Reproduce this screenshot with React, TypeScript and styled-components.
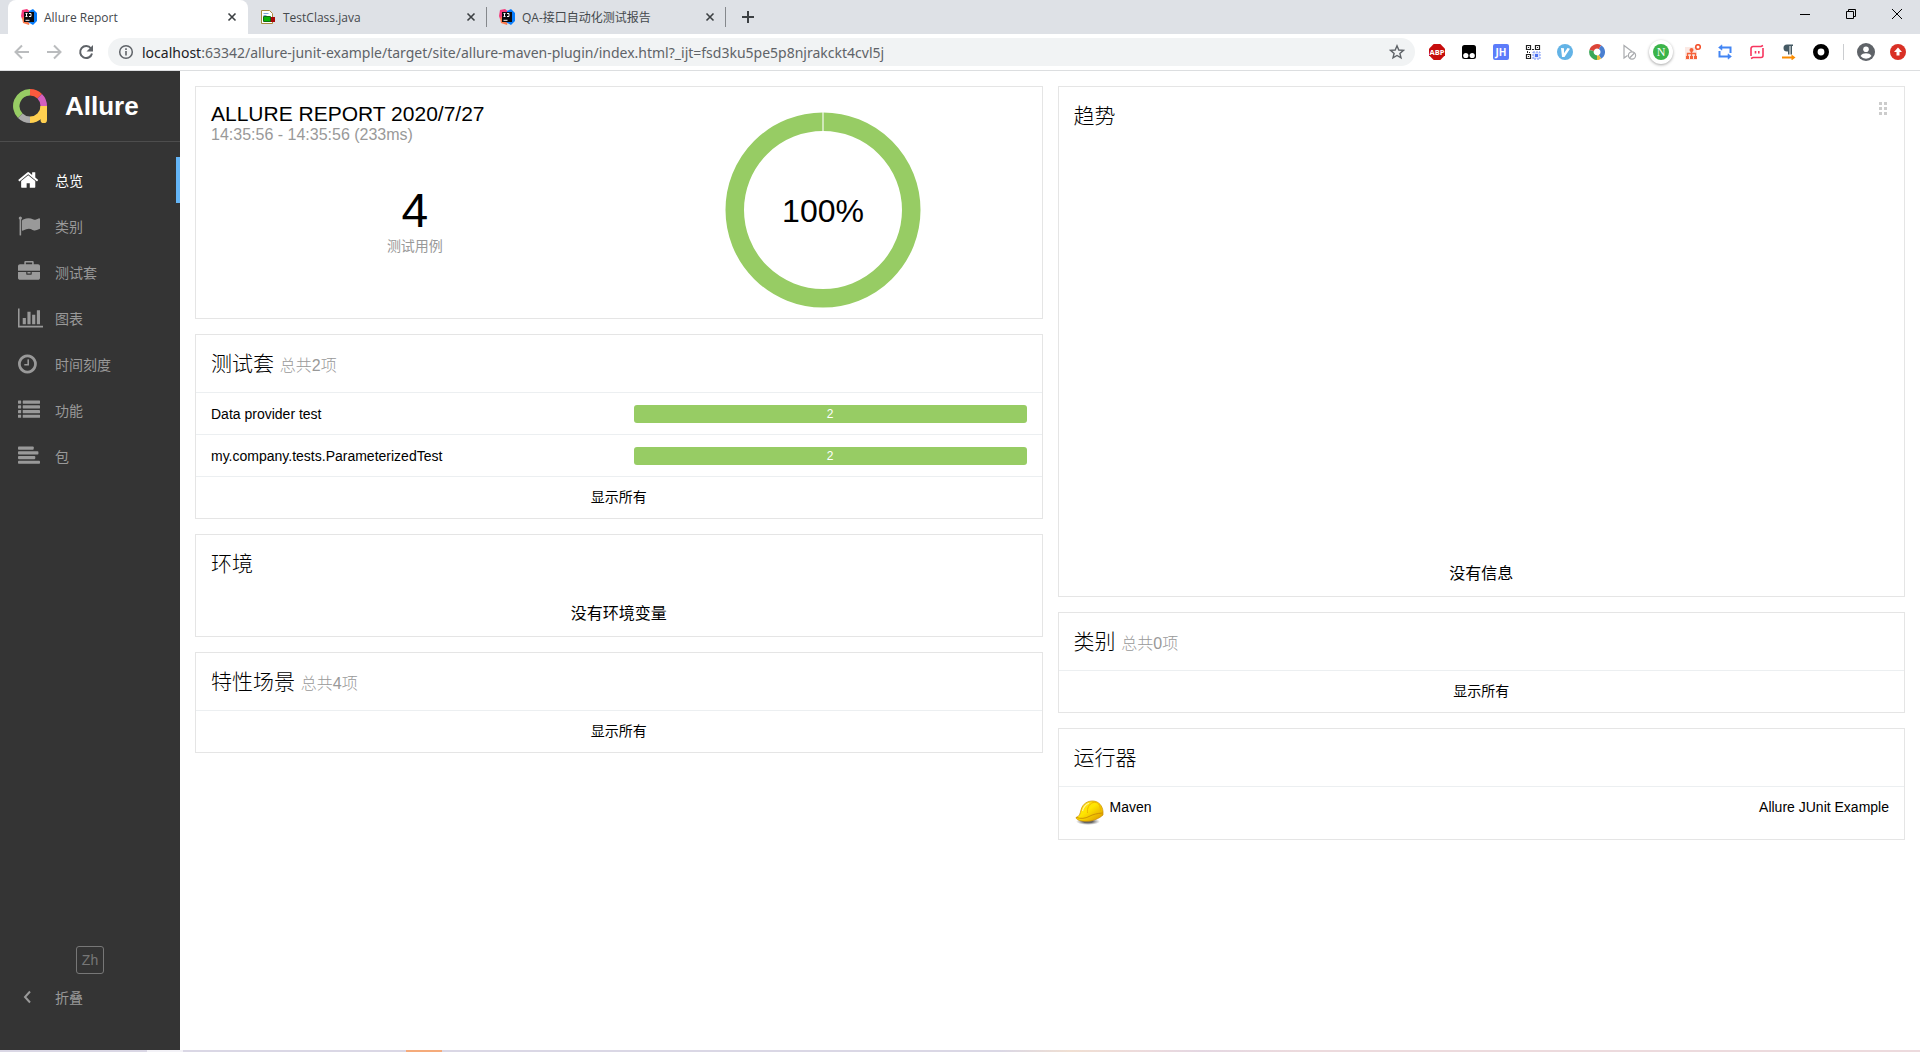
import React from "react";
import styled, { createGlobalStyle } from "styled-components";

const sans = `"Liberation Sans", Arial, "Noto Sans CJK SC", sans-serif`;
const chromeFont = `"Open Sans", "Noto Sans CJK SC", sans-serif`;

const GlobalStyle = createGlobalStyle`
  * { box-sizing: border-box; }
  body { margin: 0; background: #fff; font-family: ${sans}; font-size: 14px; color: #000; }
  a { color: inherit; text-decoration: none; }
  button { border: 0; padding: 0; background: none; font: inherit; color: inherit; cursor: pointer; }
  h1, h2, p, ul { margin: 0; padding: 0; font-weight: 400; }
  ul { list-style: none; }
  svg { display: block; flex: none; }
`;

const Screen = styled.div`
  display: flex;
  flex-direction: column;
  min-height: 100vh;
`;

/* ---------- browser chrome ---------- */

const TabStrip = styled.div`
  display: flex;
  height: 34px;
  padding-left: 8px;
  background: #dee1e6;
  font-family: ${chromeFont};
  font-size: 12px;
`;

const Tab = styled.div<{ $active?: boolean; $divided?: boolean }>`
  position: relative;
  display: flex;
  align-items: center;
  width: ${(p) => (p.$active ? 240 : 239)}px;
  padding: 0 10px 0 ${(p) => (p.$active ? 13 : 12)}px;
  color: #45494d;
  border-radius: 8px 8px 0 0;
  background: ${(p) => (p.$active ? "#fff" : "transparent")};
  &::after {
    content: "";
    position: absolute;
    right: 0;
    top: 7px;
    width: 1px;
    height: 20px;
    background: ${(p) => (p.$divided ? "#85888c" : "transparent")};
  }
`;

const TabTitle = styled.button`
  flex: 1;
  display: flex;
  align-items: center;
  gap: 7px;
  text-align: left;
  white-space: nowrap;
`;

const IconButton = styled.button<{ $size?: number }>`
  display: flex;
  align-items: center;
  justify-content: center;
  flex: none;
  width: ${(p) => p.$size ?? 32}px;
  height: ${(p) => p.$size ?? 32}px;
`;

const NewTab = styled(IconButton)`
  margin-left: 6px;
  height: 34px;
`;

const WindowControls = styled.div`
  display: flex;
  margin-left: auto;
`;

const WindowButton = styled(IconButton)`
  width: 46px;
  height: 28px;
`;

const Toolbar = styled.div`
  display: flex;
  align-items: center;
  height: 37px;
  padding: 0 6px;
  border-bottom: 1px solid #dcdee0;
  background: #fff;
`;

const AddressBar = styled.label`
  flex: 1;
  display: flex;
  align-items: center;
  height: 28px;
  margin: 0 6px;
  padding: 0 2px 0 10px;
  border-radius: 14px;
  background: #f1f3f4;
  font-family: "Noto Sans", "Open Sans", sans-serif;
  font-size: 14px;
`;

const Host = styled.span`
  padding-left: 8px;
  color: #202124;
`;

const UrlInput = styled.input`
  flex: 1;
  min-width: 0;
  padding: 0;
  border: 0;
  outline: 0;
  background: transparent;
  color: #5f6368;
  font: inherit;
`;

const Separator = styled.span`
  width: 1px;
  height: 16px;
  margin: 0 6px;
  background: #cbcdd0;
`;

const Halo = styled.span`
  display: flex;
  align-items: center;
  justify-content: center;
  flex: none;
  width: 24px;
  height: 24px;
  border-radius: 50%;
  background: #fff;
  box-shadow: 0 1px 3px rgba(0, 0, 0, 0.35);
`;

/* ---------- report page ---------- */

const Page = styled.div`
  flex: 1;
  display: flex;
`;

const Sidebar = styled.aside`
  display: flex;
  flex-direction: column;
  flex: none;
  width: 180px;
  padding-bottom: 30px;
  background: #343434;
  color: #999;
`;

const Brand = styled.a`
  display: flex;
  align-items: center;
  gap: 18px;
  height: 71px;
  padding-left: 13px;
  border-bottom: 1px solid #4d4d4d;
  color: #fff;
  font-size: 26px;
  font-weight: 700;
`;

const Nav = styled.nav`
  padding-top: 15px;
`;

const NavLink = styled.a<{ $active?: boolean }>`
  display: flex;
  align-items: center;
  height: 46px;
  padding-left: 18px;
  border-right: 4px solid ${(p) => (p.$active ? "#64b5f6" : "transparent")};
  color: ${(p) => (p.$active ? "#fff" : "#999")};
`;

const NavIcon = styled.span`
  width: 37px;
`;

const SidebarFooter = styled.div`
  display: flex;
  flex-direction: column;
  margin-top: auto;
`;

const LanguageButton = styled.button`
  align-self: center;
  width: 28px;
  height: 28px;
  border: 1px solid #777;
  border-radius: 3px;
  color: #777;
`;

const CollapseButton = styled.button`
  display: flex;
  align-items: center;
  height: 46px;
  padding-left: 18px;
`;

const Content = styled.main`
  flex: 1;
  display: grid;
  grid-template-columns: 1fr 1fr;
  align-items: start;
  gap: 15px;
  padding: 15px;
`;

const Column = styled.div`
  display: flex;
  flex-direction: column;
  gap: 15px;
`;

const Card = styled.section`
  border: 1px solid #e5e5e5;
  background: #fff;
`;

const CardHeader = styled.header`
  display: flex;
  justify-content: space-between;
  padding: 0 15px;
`;

const CardTitle = styled.h2`
  font-size: 21px;
  font-weight: 300;
  line-height: 57px;
`;

const CardCount = styled.small`
  color: #999;
  font-size: 16px;
  line-height: 16px;
`;

const Summary = styled.div`
  display: grid;
  grid-template-columns: 1fr 1fr;
  padding: 15px 15px 10px;
`;

const SummaryTitle = styled.h1`
  font-size: 21px;
  line-height: 24px;
`;

const SummaryTime = styled.p`
  color: #999;
  font-size: 16px;
  line-height: 18px;
`;

const Statistic = styled.div`
  padding-top: 40px;
  text-align: center;
`;

const StatisticValue = styled.div`
  font-size: 48px;
  line-height: 54px;
`;

const StatisticLabel = styled.div`
  color: #999;
  line-height: 16px;
`;

const DonutBox = styled.div`
  display: flex;
  justify-content: center;
  padding-top: 10px;
`;

const Row = styled.a`
  display: grid;
  grid-template-columns: 1fr 1fr;
  align-items: center;
  height: 42px;
  border-top: 1px solid #eceff1;
`;

const RowName = styled.span`
  padding: 0 15px;
`;

const Bar = styled.span`
  margin: 0 15px;
  border-radius: 3px;
  background: #97cc64;
  color: #fff;
  font-size: 12px;
  line-height: 18px;
  text-align: center;
`;

const ShowAll = styled.a`
  display: flex;
  align-items: center;
  justify-content: center;
  height: 42px;
  padding-bottom: 3px;
  border-top: 1px solid #eceff1;
`;

const ChartArea = styled.div`
  height: 408px;
`;

const EmptyMessage = styled.p`
  font-size: 16px;
  line-height: 44px;
  text-align: center;
`;

const DragHandle = styled.button`
  align-self: flex-start;
  margin: 15px 2px 0 0;
  cursor: grab;
`;

const Executor = styled.a`
  display: flex;
  gap: 4px;
  padding: 12px 15px 8px;
  border-top: 1px solid #eceff1;
  line-height: 16px;
`;

const ExecutorBuild = styled.span`
  margin-left: auto;
`;

const Taskbar = styled.div`
  height: 2px;
  background: linear-gradient(
    90deg,
    #dad7e5 0 147px,
    #f3f2f7 147px 183px,
    #dad7e5 183px 406px,
    #f5ab7b 406px 442px,
    #dad7e5 442px 1000px,
    #f0dfd2 1070px,
    #ecdadd 1150px,
    #e4d7e2 1200px,
    #ecdadd 1300px
  );
`;

/* ---------- drawings ---------- */

const IdeaIcon = () => (
  <svg width="16" height="16" viewBox="0 0 16 16">
    <path d="M1 1l5-1 4 3-4 6-5 1-1-3z" fill="#f43b7c" />
    <path d="M1 9l4-3 4 6-1 4-6-2z" fill="#fc7a4c" />
    <path d="M8 2l4-2 4 4v8l-4 4-5-3z" fill="#087cfa" />
    <rect x="3" y="3" width="10" height="10" fill="#0b0b0f" />
    <path d="M4.500 4.500h2M5.500 4.500v3M4.500 7.500h2M8 4.500h2v3H8M4.500 11.300h4" stroke="#fff" fill="none" />
  </svg>
);

const JavaFileIcon = () => (
  <svg width="16" height="16" viewBox="0 0 16 16">
    <path d="M1.500 1.500h8l3 3v10h-11z" fill="#fff" stroke="#a88a3e" />
    <path d="M3.500 4.500h5M3.500 6.500h3" stroke="#7fa5d4" />
    <rect x="4" y="8" width="6" height="5" fill="#0bb40b" />
    <rect x="10" y="8" width="5" height="5" fill="#a80808" />
    <path d="M3.500 7.500h7v5h-7z" fill="none" stroke="#156a15" />
  </svg>
);

const CloseIcon = () => (
  <svg width="10" height="10" viewBox="0 0 10 10">
    <path d="M1.500 1.500l7 7M8.500 1.500l-7 7" stroke="#3c4043" strokeWidth="1.600" />
  </svg>
);

const stroke = { fill: "none", strokeWidth: 2 };

const ArrowIcon = ({ flip }: { flip?: boolean }) => (
  <svg width="16" height="16" viewBox="0 0 16 16">
    <path
      d={flip ? "M1 8h13M8 1.500L14.500 8 8 14.500" : "M15 8H2M8 1.500L1.500 8 8 14.500"}
      {...stroke}
      stroke="#babcbe"
    />
  </svg>
);

const ReloadIcon = () => (
  <svg width="16" height="16" viewBox="0 0 16 16">
    <path d="M13 4.500A6 6 0 1 0 14 9.500" {...stroke} stroke="#5f6368" />
    <path d="M15 1v6.500H8.500z" fill="#5f6368" />
  </svg>
);

const InfoIcon = () => (
  <svg width="16" height="16" viewBox="0 0 16 16">
    <circle cx="8" cy="8" r="6.300" fill="none" stroke="#5f6368" strokeWidth="1.500" />
    <path d="M8 7v4.500M8 4.300v1.700" stroke="#5f6368" strokeWidth="1.600" />
  </svg>
);

const StarIcon = () => (
  <svg width="16" height="16" viewBox="0 0 16 16">
    <path
      d="M8 1.800l1.800 4.200 4.600.4-3.500 3 1.100 4.500L8 11.500l-4 2.400 1.100-4.500-3.500-3 4.600-.4z"
      fill="none"
      stroke="#5f6368"
      strokeWidth="1.400"
    />
  </svg>
);

const extText = { fontFamily: "Open Sans", fontWeight: 700, textAnchor: "middle" as const };

const extensions: { name: string; art: React.ReactNode }[] = [
  {
    name: "AdBlock Plus",
    art: (
      <>
        <path d="M4.700 0h6.600L16 4.700v6.600L11.300 16H4.700L0 11.300V4.700z" fill="#c70d0d" />
        <text x="8" y="10.800" fontSize="7.500" fill="#fff" {...extText}>ABP</text>
      </>
    ),
  },
  {
    name: "Tampermonkey",
    art: (
      <>
        <rect x="1" y="1" width="14" height="14" rx="2.500" />
        <circle cx="4.800" cy="11.500" r="2.600" fill="#fff" />
        <circle cx="11.200" cy="11.500" r="2.600" fill="#fff" />
      </>
    ),
  },
  {
    name: "JSON Handle",
    art: (
      <>
        <rect width="16" height="16" rx="2" fill="#5c7cfa" />
        <text x="8" y="12" fontSize="10" fill="#fff" {...extText}>JH</text>
      </>
    ),
  },
  {
    name: "QR code",
    art: (
      <>
        <path
          d="M1.500 1.500h4v4h-4zM10.500 1.500h4v4h-4zM1.500 10.500h4v4h-4z"
          fill="none"
          stroke="#222"
          strokeWidth="1.200"
        />
        <path d="M3 3h1v1H3zM12 3h1v1h-1zM3 12h1v1H3zM7 5h2v1H7zM2 7h1v2H2zM4 8h1v1H4z" fill="#222" />
        <path d="M8 8h7v7H8z" fill="#dbe3ff" stroke="#7b95f5" strokeDasharray="2 1" />
        <rect x="10" y="10" width="3" height="3" fill="#4f73f2" />
      </>
    ),
  },
  {
    name: "Vimium",
    art: (
      <>
        <circle cx="8" cy="8" r="8" fill="#63b3e6" />
        <path d="M4 4l3 .3v4.900l3.500-5.200 2.500.800L7.500 13H5z" fill="#fff" />
      </>
    ),
  },
  {
    name: "Colour ring",
    art: (
      <g fill="none" strokeWidth="4.500">
        <path d="M2.600 6.500A5.700 5.700 0 0 1 11 3.100" stroke="#db4437" />
        <path d="M11 3.100A5.700 5.700 0 0 1 11 12.900" stroke="#4a7fd0" />
        <path d="M11 12.900A5.700 5.700 0 0 1 5 12.900" stroke="#e8b93a" />
        <path d="M8 13.700A5.700 5.700 0 0 1 2.600 6.500" stroke="#3aa757" />
      </g>
    ),
  },
  {
    name: "Cursor blocked",
    art: (
      <g fill="none" stroke="#a9abae" strokeWidth="1.200">
        <path d="M6.500 11.500L3 14V1.500l8 6" />
        <circle cx="11" cy="11.500" r="3.600" />
        <path d="M8.500 14l5-5" />
      </g>
    ),
  },
  {
    name: "N extension",
    art: (
      <>
        <circle cx="8" cy="8" r="8" fill="#3cb44a" />
        <text x="8" y="12" fontSize="12" fill="#fff" fontFamily="Liberation Serif" textAnchor="middle">N</text>
      </>
    ),
  },
  {
    name: "Sitemap",
    art: (
      <>
        <rect y="3" width="12" height="13" fill="#fbe9e4" />
        <circle cx="6.500" cy="6" r="2" fill="#f4623a" />
        <circle cx="13" cy="3" r="2.300" fill="none" stroke="#f4512c" strokeWidth="1.600" />
        <path d="M6.500 7v6M2.500 13v-3.500h8V13" fill="none" stroke="#f4623a" strokeWidth="1.400" />
        <path d="M1 12h3v3H1zM5 12h3v3H5zM9 12h3v3H9z" fill="#f4623a" />
      </>
    ),
  },
  {
    name: "Repeat",
    art: (
      <g fill="none" stroke="#4285f4" strokeWidth="2">
        <path d="M13.500 9V3.500H4M2.500 7v5.500H12" />
        <path d="M5 .8L1.500 3.500 5 6.200zM11 9.800l3.500 2.700L11 15.200z" fill="#4285f4" strokeWidth="0.500" />
      </g>
    ),
  },
  {
    name: "Recorder",
    art: (
      <g fill="none" stroke="#f7365f" strokeWidth="1.600">
        <path d="M14 1.500l-2 1H4a2 2 0 0 0-2 2V12M2 14.500l2-1H12a2 2 0 0 0 2-2V4" />
        <path d="M6.500 7v2.500M9.800 7v2.500" />
      </g>
    ),
  },
  {
    name: "Paragraph",
    art: (
      <>
        <path d="M6 7.500a3.200 3.200 0 0 1 0-7h6V2h-1v8.500H9.500V2h-1v8.500H7v-3z" fill="#455a64" />
        <path d="M1 13.500h10" stroke="#fb8c00" strokeWidth="2" />
        <path d="M10.500 10.500l4 3-4 3z" fill="#fb8c00" />
      </>
    ),
  },
  { name: "Circle", art: <circle cx="8" cy="8" r="5.700" fill="#fff" stroke="#000" strokeWidth="4.600" /> },
];

const AllureLogo = () => (
  <svg width="34" height="34" viewBox="0 0 34 34" fill="none" strokeWidth="6.500">
    <path d="M7.300 26.700A13.750 13.750 0 0 1 17 3.250" stroke="#97cc64" />
    <path d="M17 3.250A13.750 13.750 0 0 1 26.700 7.300" stroke="#fd5a3e" />
    <path d="M26.700 7.300A13.750 13.750 0 0 1 30.750 17" stroke="#d35ebe" />
    <path d="M17 30.750A13.750 13.750 0 0 1 7.300 26.700" stroke="#aaa" />
    <path d="M30.750 17A13.750 13.750 0 0 1 17 30.750" stroke="#ffd050" />
    <path d="M27.500 17H34V31a3.200 3.200 0 0 1-6.500 0z" fill="#ffd050" strokeWidth="0" />
  </svg>
);

const Glyph = ({ x = 0, units = 1792, children }: { x?: number; units?: number; children: React.ReactNode }) => (
  <svg height="22" width={(units / 1792) * 22} viewBox={`${x} 0 ${units} 1792`} fill="currentColor">
    {children}
  </svg>
);

const lines = [128, 512, 896, 1280];

const navItems = [
  {
    label: "总览",
    icon: (
      <Glyph x={64} units={1664}>
        <path d="M1472 992v480q0 26-19 45t-45 19h-384v-384h-256v384h-384q-26 0-45-19t-19-45v-480q0-1 .5-3t.5-3l575-474 575 474q1 2 1 6zm223-69l-62 74q-8 9-21 11h-3q-13 0-21-7l-692-577-692 577q-12 8-24 7-13-2-21-11l-62-74q-8-10-7-23.500t11-21.500l719-599q32-26 76-26t76 26l244 204v-195q0-14 9-23t23-9h192q14 0 23 9t9 23v408l219 182q10 8 11 21.500t-7 23.500z" />
      </Glyph>
    ),
  },
  {
    label: "类别",
    icon: (
      <Glyph>
        <path d="M320 256q0 72-64 110v1266q0 13-9.500 22.500t-22.500 9.500h-64q-13 0-22.500-9.500t-9.500-22.500v-1266q-64-38-64-110 0-53 37.500-90.500t90.500-37.500 90.500 37.500 37.500 90.500zm1472 64v763q0 25-12.500 38.500t-39.500 27.500q-215 116-369 116-61 0-123.500-22t-108.500-48-115.500-48-142.500-22q-192 0-464 146-17 9-33 9-26 0-45-19t-19-45v-742q0-32 31-55 21-14 79-43 236-120 421-120 107 0 200 29t219 88q38 19 88 19 54 0 117.500-21t110-47 88-47 54.500-21q26 0 45 19t19 45z" />
      </Glyph>
    ),
  },
  {
    label: "测试套",
    icon: (
      <Glyph>
        <path d="M640 256h512v-128h-512v128zm1152 640v480q0 66-47 113t-113 47h-1472q-66 0-113-47t-47-113v-480h672v160q0 26 19 45t45 19h320q26 0 45-19t19-45v-160h672zm-768 0v128h-256v-128h256zm768-480v384h-1792v-384q0-66 47-113t113-47h352v-160q0-40 28-68t68-28h576q40 0 68 28t28 68v160h352q66 0 113 47t47 113z" />
      </Glyph>
    ),
  },
  {
    label: "图表",
    icon: (
      <Glyph units={2048}>
        <path d="M640 896v512h-256v-512h256zm384-512v1024h-256v-1024h256zm1024 1152v128h-2048v-1536h128v1408h1920zm-640-896v768h-256v-768h256zm384-384v1152h-256v-1152h256z" />
      </Glyph>
    ),
  },
  {
    label: "时间刻度",
    icon: (
      <Glyph x={128} units={1536}>
        <path d="M1024 544v448q0 14-9 23t-23 9h-320q-14 0-23-9t-9-23v-64q0-14 9-23t23-9h224v-352q0-14 9-23t23-9h64q14 0 23 9t9 23zm416 352q0-148-73-273t-198-198-273-73-273 73-198 198-73 273 73 273 198 198 273 73 273-73 198-198 73-273zm224 0q0 209-103 385.500t-279.500 279.500-385.500 103-385.500-103-279.500-279.500-103-385.500 103-385.500 279.500-279.500 385.500-103 385.500 103 279.500 279.500 103 385.500z" />
      </Glyph>
    ),
  },
  {
    label: "功能",
    icon: (
      <Glyph>
        {lines.map((y) => (
          <React.Fragment key={y}>
            <rect x="0" y={y} width="256" height="256" rx="32" />
            <rect x="384" y={y} width="1408" height="256" rx="32" />
          </React.Fragment>
        ))}
      </Glyph>
    ),
  },
  {
    label: "包",
    icon: (
      <Glyph>
        {lines.map((y, i) => (
          <rect key={y} x="0" y={y} width={[1280, 1664, 1408, 1792][i]} height="256" rx="64" />
        ))}
      </Glyph>
    ),
  },
];

const Donut = () => (
  <svg width="196" height="196" viewBox="0 0 196 196" role="img" aria-label="100%">
    <circle cx="98" cy="98" r="88.250" fill="none" stroke="#97cc64" strokeWidth="18.500" />
    <path d="M98 0v20" stroke="#fff" strokeOpacity="0.550" strokeWidth="2" />
    <text x="98" y="110" fontSize="32" textAnchor="middle" fontFamily="Liberation Sans">100%</text>
  </svg>
);

const HelmetIcon = () => (
  <svg width="32" height="32" viewBox="0 0 32 32">
    <defs>
      <linearGradient id="helmet" x1="0" y1="0" x2="1" y2="1">
        <stop offset="0" stopColor="#ffd71f" />
        <stop offset="0.450" stopColor="#ffe600" />
        <stop offset="1" stopColor="#d99000" />
      </linearGradient>
      <radialGradient id="shade">
        <stop offset="0.400" stopColor="#555" stopOpacity="0.900" />
        <stop offset="1" stopColor="#888" stopOpacity="0" />
      </radialGradient>
    </defs>
    <ellipse cx="14" cy="22.500" rx="12" ry="3.500" fill="url(#shade)" />
    <path d="M2 18.500C5.500 17.500 6 15 7 11 8.500 4.500 14 1.800 19 2c6 .3 9.500 5 10 10.500v3.500C26 19 19 22.500 12 22.300c-5 0-9-1.300-10-3.300z" fill="url(#helmet)" stroke="#c98b05" strokeWidth="0.700" />
    <path d="M2.500 18.500c4 1.500 9 1 12.500-1 4-2.200 8-3 13.500-3.500" fill="none" stroke="#c98b05" strokeWidth="0.900" />
    <path d="M13.500 14c-.5-5 1.500-9 5.500-10.500 5-1 7.500 2.500 7.500 8.500" fill="none" stroke="#efb400" strokeWidth="1" />
    <path d="M8.500 12c1-4 3-6.500 6.500-7.800" fill="none" stroke="#fff3a0" strokeWidth="1.200" />
  </svg>
);

/* ---------- composition ---------- */

const tabs = [
  { title: "Allure Report", icon: <IdeaIcon /> },
  { title: "TestClass.java", icon: <JavaFileIcon /> },
  { title: "QA-接口自动化测试报告", icon: <IdeaIcon /> },
];

const suites = [
  { name: "Data provider test", passed: 2 },
  { name: "my.company.tests.ParameterizedTest", passed: 2 },
];

function Browser() {
  return (
    <header>
      <TabStrip>
        {tabs.map((tab, i) => (
          <Tab key={tab.title} $active={i === 0} $divided={i > 0}>
            <TabTitle>
              {tab.icon}
              {tab.title}
            </TabTitle>
            <IconButton $size={12} aria-label="关闭标签页"><CloseIcon /></IconButton>
          </Tab>
        ))}
        <NewTab aria-label="新标签页">
          <svg width="12" height="12" viewBox="0 0 12 12">
            <path d="M6 0v12M0 6h12" {...stroke} stroke="#3c4043" />
          </svg>
        </NewTab>
        <WindowControls>
          <WindowButton aria-label="最小化">
            <svg width="10" height="10"><path d="M0 5.500h10" stroke="#000" /></svg>
          </WindowButton>
          <WindowButton aria-label="还原">
            <svg width="10" height="10">
              <path d="M.5 2.500h7v7h-7zM2.500 2V.5h7v7H8" fill="none" stroke="#000" />
            </svg>
          </WindowButton>
          <WindowButton aria-label="关闭">
            <svg width="10" height="10"><path d="M0 0l10 10M10 0L0 10" stroke="#000" /></svg>
          </WindowButton>
        </WindowControls>
      </TabStrip>
      <Toolbar>
        <IconButton aria-label="后退"><ArrowIcon /></IconButton>
        <IconButton aria-label="前进"><ArrowIcon flip /></IconButton>
        <IconButton aria-label="刷新"><ReloadIcon /></IconButton>
        <AddressBar>
          <InfoIcon />
          <Host>localhost</Host>
          <UrlInput
            aria-label="地址"
            defaultValue=":63342/allure-junit-example/target/site/allure-maven-plugin/index.html?_ijt=fsd3ku5pe5p8njrakckt4cvl5j"
          />
          <IconButton aria-label="收藏"><StarIcon /></IconButton>
        </AddressBar>
        {extensions.map((ext) => {
          const art = <svg width="16" height="16" viewBox="0 0 16 16">{ext.art}</svg>;
          return (
            <IconButton key={ext.name} aria-label={ext.name}>
              {ext.name === "N extension" ? <Halo>{art}</Halo> : art}
            </IconButton>
          );
        })}
        <Separator />
        <IconButton aria-label="用户">
          <svg width="18" height="18" viewBox="0 0 18 18">
            <circle cx="9" cy="9" r="9" fill="#5f6368" />
            <circle cx="9" cy="6.300" r="2.800" fill="#fff" />
            <path d="M3.500 13c1-2 3.500-2.700 5.500-2.700s4.500.7 5.500 2.700a7 7 0 0 1-11 0z" fill="#fff" />
          </svg>
        </IconButton>
        <IconButton aria-label="更新">
          <svg width="16" height="16" viewBox="0 0 16 16">
            <circle cx="8" cy="8" r="8" fill="#d93025" />
            <path d="M8 3.500l4 4.500H9.500v3.500h-3V8H4z" fill="#fff" />
          </svg>
        </IconButton>
      </Toolbar>
    </header>
  );
}

export default function App() {
  return (
    <Screen>
      <GlobalStyle />
      <Browser />
      <Page>
        <Sidebar>
          <Brand href="#">
            <AllureLogo />
            Allure
          </Brand>
          <Nav>
            <ul>
              {navItems.map((item, i) => (
                <li key={item.label}>
                  <NavLink href="#" $active={i === 0}>
                    <NavIcon>{item.icon}</NavIcon>
                    {item.label}
                  </NavLink>
                </li>
              ))}
            </ul>
          </Nav>
          <SidebarFooter>
            <LanguageButton>Zh</LanguageButton>
            <CollapseButton>
              <NavIcon>
                <svg width="20" height="14" viewBox="0 0 20 14">
                  <path d="M12 1.500L7 7l5 5.500" fill="none" stroke="currentColor" strokeWidth="2" />
                </svg>
              </NavIcon>
              折叠
            </CollapseButton>
          </SidebarFooter>
        </Sidebar>
        <Content>
          <Column>
            <Card>
              <Summary>
                <div>
                  <SummaryTitle>ALLURE REPORT 2020/7/27</SummaryTitle>
                  <SummaryTime>14:35:56 - 14:35:56 (233ms)</SummaryTime>
                  <Statistic>
                    <StatisticValue>4</StatisticValue>
                    <StatisticLabel>测试用例</StatisticLabel>
                  </Statistic>
                </div>
                <DonutBox><Donut /></DonutBox>
              </Summary>
            </Card>
            <Card>
              <CardHeader>
                <CardTitle>测试套 <CardCount>总共2项</CardCount></CardTitle>
              </CardHeader>
              {suites.map((suite) => (
                <Row href="#" key={suite.name}>
                  <RowName>{suite.name}</RowName>
                  <Bar>{suite.passed}</Bar>
                </Row>
              ))}
              <ShowAll href="#">显示所有</ShowAll>
            </Card>
            <Card>
              <CardHeader><CardTitle>环境</CardTitle></CardHeader>
              <EmptyMessage>没有环境变量</EmptyMessage>
            </Card>
            <Card>
              <CardHeader>
                <CardTitle>特性场景 <CardCount>总共4项</CardCount></CardTitle>
              </CardHeader>
              <ShowAll href="#">显示所有</ShowAll>
            </Card>
          </Column>
          <Column>
            <Card>
              <CardHeader>
                <CardTitle>趋势</CardTitle>
                <DragHandle aria-label="拖动">
                  <svg width="8" height="13" fill="#ccc">
                    {[0, 5, 10].map((y) => (
                      <path key={y} d={`M0 ${y}h3v3h-3zM5 ${y}h3v3h-3z`} />
                    ))}
                  </svg>
                </DragHandle>
              </CardHeader>
              <ChartArea />
              <EmptyMessage>没有信息</EmptyMessage>
            </Card>
            <Card>
              <CardHeader>
                <CardTitle>类别 <CardCount>总共0项</CardCount></CardTitle>
              </CardHeader>
              <ShowAll href="#">显示所有</ShowAll>
            </Card>
            <Card>
              <CardHeader><CardTitle>运行器</CardTitle></CardHeader>
              <Executor href="#">
                <HelmetIcon />
                <span>Maven</span>
                <ExecutorBuild>Allure JUnit Example</ExecutorBuild>
              </Executor>
            </Card>
          </Column>
        </Content>
      </Page>
      <Taskbar />
    </Screen>
  );
}
